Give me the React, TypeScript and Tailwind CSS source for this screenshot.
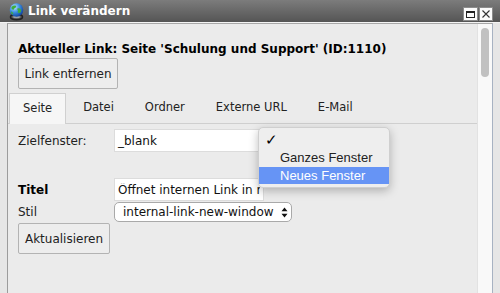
import React from 'react'

const tabs = ['Seite', 'Datei', 'Ordner', 'Externe URL', 'E-Mail']

function Globe() {
  return (
    <svg width="17" height="19" viewBox="0 0 17 19">
      <defs>
        <radialGradient id="gl" cx="0.35" cy="0.3" r="0.75">
          <stop offset="0" stopColor="#bfe3ff" />
          <stop offset="0.5" stopColor="#3b8fe0" />
          <stop offset="1" stopColor="#0d3f9a" />
        </radialGradient>
      </defs>
      <ellipse cx="8.5" cy="15" rx="6" ry="2.6" fill="none" stroke="#222" strokeWidth="1.6" />
      <ellipse cx="8.5" cy="15" rx="3.4" ry="1.2" fill="#9aa0a6" />
      <circle cx="8.5" cy="8" r="6.8" fill="url(#gl)" />
      <path d="M4 4.5c1.5-1 3-1.2 4-.6.6.9-.3 1.6-1.2 2-.9.5-.4 1.6-1.6 1.8-1 .1-1.6-.8-1.9-1.6z" fill="#3fae3a" />
      <path d="M9.5 6.5c1.2-.4 2.6 0 3.4.9.5 1.1 0 2.6-1 3.4-.9.6-1.9.3-2.1-.7-.2-1 .6-1.5-.3-2.4-.4-.5-.4-1 0-1.2z" fill="#3fae3a" />
      <path d="M3 9.5c1 .2 2 1 2.2 2 .1.7-.4 1.1-1 .8C3.5 11.7 3 10.7 3 9.5z" fill="#3fae3a" />
    </svg>
  )
}

function TitleBar() {
  return (
    <div className="h-[22px] flex items-center bg-gradient-to-b from-[#7c7c7c] to-[#555555] relative">
      <div className="ml-[8px] mt-[1px]">
        <Globe />
      </div>
      <span className="ml-[3px] text-white font-bold text-[12px] leading-none">Link verändern</span>
      <div className="ml-auto flex gap-[1px] mr-[7px] mt-[6px]">
        <div className="w-[15px] h-[14px] bg-[#fbfbfb] border border-[#8c8c8c] flex items-center justify-center">
          <div className="w-[9px] h-[7px] border border-[#222] border-t-2" />
        </div>
        <div className="w-[14px] h-[14px] bg-[#fbfbfb] border border-[#8c8c8c] flex items-center justify-center">
          <svg width="8" height="8" viewBox="0 0 8 8">
            <path d="M0.5 0.5L7.5 7.5M7.5 0.5L0.5 7.5" stroke="#333" strokeWidth="1.1" />
          </svg>
        </div>
      </div>
    </div>
  )
}

function Button({ label, w }: { label: string; w: string }) {
  return (
    <div
      className={`${w} h-[31px] border border-[#b3b3b3] rounded-[2px] bg-[#ededed] flex items-center justify-center text-[12px] text-[#222]`}
    >
      {label}
    </div>
  )
}

export default function App() {
  return (
    <div className="w-[500px] h-[293px] overflow-hidden bg-[#e6e6e6] relative font-['DejaVu_Sans',sans-serif]">
      <TitleBar />
      <div className="h-[1px] bg-[#f4f4f4]" />
      <div className="flex h-[270px] px-[7px]">
        <div className="flex-1 flex border-l border-t border-r border-l-[#9c9c9c] border-t-[#a8a8a8] border-r-[#a7b2c2] bg-[#ebebeb]">
          <div className="flex-1 flex flex-col">
            <div className="pl-[10px] pt-[17px]">
              <div className="h-[16px] flex items-center font-bold text-[12px] text-black whitespace-nowrap">
                Aktueller Link: Seite 'Schulung und Support' (ID:1110)
              </div>
              <div className="mt-[1px]">
                <Button label="Link entfernen" w="w-[100px]" />
              </div>
            </div>

            <div className="mt-[4px] flex border-b border-[#cfcfcf] pl-[1px] h-[31px] gap-[3px]">
              {tabs.map((t, i) => (
                <div
                  key={t}
                  className={`px-[13px] flex items-center text-[11.5px] text-[#222] ${
                    i === 0 ? 'bg-[#f6f6f6] border border-b-0 border-[#d0d0d0] -mb-[1px]' : 'border border-transparent'
                  }`}
                >
                  {t}
                </div>
              ))}
            </div>

            <div className="pl-[10px]">
              <div className="mt-[5px] flex items-center">
                <div className="w-[96px] text-[12px] text-[#222]">Zielfenster:</div>
                <div className="w-[150px] h-[23px] bg-white border border-[#dcdcdc] flex items-center px-[3px] text-[12px] text-[#111]">
                  _blank
                </div>
              </div>

              <div className="mt-[26px] flex items-center">
                <div className="w-[96px] text-[12px] font-bold text-black">Titel</div>
                <input
                  readOnly
                  value="Öffnet internen Link in neuem Fenster"
                  className="w-[150px] h-[23px] bg-white border border-[#dcdcdc] px-[3px] text-[12px] leading-normal text-[#111] outline-none"
                />
              </div>

              <div className="mt-[1px] flex items-center">
                <div className="w-[96px] text-[12px] text-[#222]">Stil</div>
                <div className="w-[178px] h-[20px] bg-white border border-[#a9a9a9] rounded-[5px] flex items-center pl-[8px] pr-[3px] text-[12px] text-[#111] whitespace-nowrap">
                  <span>internal-link-new-window</span>
                  <svg className="ml-auto" width="7" height="11" viewBox="0 0 7 11">
                    <path d="M3.5 0.5L6.5 4.3H0.5Z M3.5 10.5L6.5 6.7H0.5Z" fill="#111" />
                  </svg>
                </div>
              </div>

              <div className="mt-[1px]">
                <Button label="Aktualisieren" w="w-[92px]" />
              </div>
            </div>
          </div>

          <div className="w-[15px] bg-[#f9f9f9] border-l border-[#e2e2e2] flex justify-center pt-[4px]">
            <div className="w-[8px] h-[49px] rounded-full bg-[#c1c1c1]" />
          </div>
        </div>
      </div>

      <div className="absolute left-[258px] top-[127px] w-[132px] h-[61px] rounded-[5px] bg-[#eeeeee] border border-[#cfcfcf] shadow-[0_3px_10px_rgba(0,0,0,0.25)] pt-[3px] font-['Liberation_Sans',sans-serif] text-[13px] text-[#222]">
        <div className="h-[18px] flex items-center pl-[6px] text-[15px] text-black">✓</div>
        <div className="h-[18px] flex items-center pl-[21px]">Ganzes Fenster</div>
        <div className="h-[17px] flex items-center pl-[21px] bg-[#6694f5] text-white">Neues Fenster</div>
      </div>
    </div>
  )
}
